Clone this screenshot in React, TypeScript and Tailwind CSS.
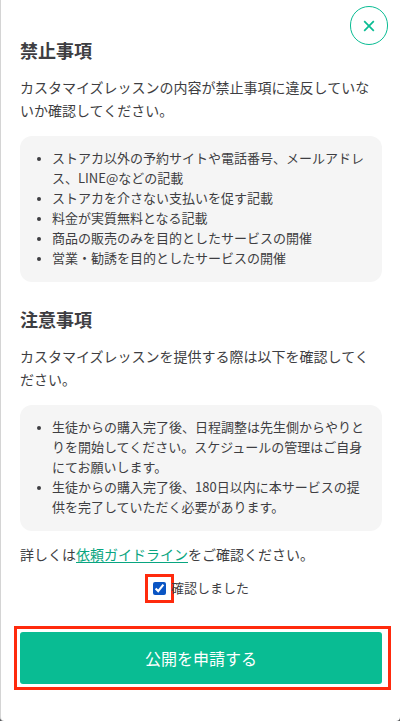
import React, { useState } from "react";

const prohibitedItems = [
  "ストアカ以外の予約サイトや電話番号、メールアドレス、LINE@などの記載",
  "ストアカを介さない支払いを促す記載",
  "料金が実質無料となる記載",
  "商品の販売のみを目的としたサービスの開催",
  "営業・勧誘を目的としたサービスの開催",
];

const noticeItems = [
  "生徒からの購入完了後、日程調整は先生側からやりとりを開始してください。スケジュールの管理はご自身にてお願いします。",
  "生徒からの購入完了後、180日以内に本サービスの提供を完了していただく必要があります。",
];

interface SectionProps {
  title: string;
  lead: string;
  items: string[];
}

const Section: React.FC<SectionProps> = ({ title, lead, items }) => (
  <section className="mb-6 last-of-type:mb-3">
    <h2 className="text-[18px] leading-[26px] font-bold">{title}</h2>
    <p className="mt-[13px] text-[14px] leading-[23px]">{lead}</p>
    <ul className="mt-[14px] list-disc rounded-xl bg-[#f5f5f5] pt-3 pr-4 pb-[14px] pl-8 text-[13px] leading-5 marker:text-[10px]">
      {items.map((item) => (
        <li key={item}>{item}</li>
      ))}
    </ul>
  </section>
);

export default function App() {
  const [confirmed, setConfirmed] = useState(true);

  return (
    <div lang="ja" className="min-h-screen bg-[#55575a]">
      <main className="relative min-h-screen rounded-b-[4px] border-l border-[#d4d4d4] bg-white pt-[37px] pr-[18px] pb-[31px] pl-[19px] font-['Noto_Sans_CJK_JP',sans-serif] text-[#3e3e42]">
        <button
          type="button"
          aria-label="閉じる"
          className="absolute top-[6px] right-3 flex h-[39px] w-[38px] items-center justify-center rounded-full border border-[#09bc93] bg-white text-[#09bc93]"
        >
          <svg
            viewBox="0 0 12 12"
            className="mt-px size-3"
            fill="none"
            stroke="currentColor"
            strokeWidth="1.7"
          >
            <path d="M1.2 1.2 10.8 10.8M10.8 1.2 1.2 10.8" />
          </svg>
        </button>

        <Section
          title="禁止事項"
          lead="カスタマイズレッスンの内容が禁止事項に違反していないか確認してください。"
          items={prohibitedItems}
        />
        <Section
          title="注意事項"
          lead="カスタマイズレッスンを提供する際は以下を確認してください。"
          items={noticeItems}
        />

        <p className="text-[14px] leading-[23px]">
          詳しくは
          <a
            href="#guideline"
            className="text-[#08a580] underline underline-offset-2"
          >
            依頼ガイドライン
          </a>
          をご確認ください。
        </p>

        <div className="mt-3 flex justify-center">
          <label className="flex items-center gap-[5px] text-[13px] leading-5">
            <input
              type="checkbox"
              checked={confirmed}
              onChange={(e) => setConfirmed(e.target.checked)}
              className="size-[13px] accent-[#0a55c4] outline-3 outline-offset-5 outline-[#ff2a0d]"
            />
            確認しました
          </label>
        </div>

        <div className="mt-7 -mr-[9px] -ml-[6px] border-3 border-[#ff2a0d] py-[3px] pr-[6px] pl-[3px]">
          <button
            type="button"
            disabled={!confirmed}
            className="h-[52px] w-full rounded-[3px] bg-[#09bc93] text-[16px] text-white"
          >
            公開を申請する
          </button>
        </div>
      </main>
    </div>
  );
}
